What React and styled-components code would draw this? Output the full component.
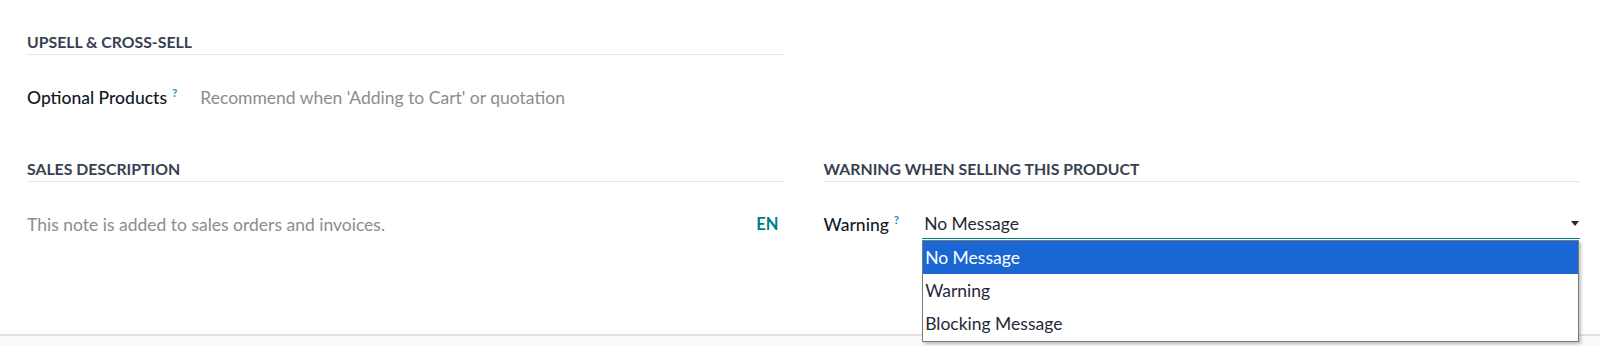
import React from 'react'
import styled, { createGlobalStyle } from 'styled-components'

const GlobalStyle = createGlobalStyle`
  html, body {
    margin: 0;
    padding: 0;
    background: #ffffff;
    font-family: Lato, "Open Sans", sans-serif;
  }
`

const options = ['No Message', 'Warning', 'Blocking Message']

const App = () => {
  return (
    <Page>
      <GlobalStyle />
      <Sheet>
        <Group>
          <Heading>Upsell &amp; Cross-Sell</Heading>
          <FieldRow>
            <Label>Optional Products<Help>?</Help></Label>
            <Placeholder>Recommend when 'Adding to Cart' or quotation</Placeholder>
          </FieldRow>
        </Group>
        <div />

        <Group $lower>
          <Heading>Sales Description</Heading>
          <NoteRow>
            <Placeholder>This note is added to sales orders and invoices.</Placeholder>
            <LangTag>EN</LangTag>
          </NoteRow>
        </Group>

        <Group $lower>
          <Heading>Warning when Selling this Product</Heading>
          <FieldRow>
            <Label>Warning<Help>?</Help></Label>
            <SelectWrap>
              <SelectValue>No Message</SelectValue>
              <Caret />
              <OptionList>
                {options.map((o, i) => (
                  <OptionItem key={o} $active={i === 0}>{o}</OptionItem>
                ))}
              </OptionList>
            </SelectWrap>
          </FieldRow>
        </Group>
      </Sheet>
      <Footer />
    </Page>
  )
}

export default App

const Page = styled.div`
  display: flex;
  flex-direction: column;
  height: 346px;
  overflow: hidden;
`

const Sheet = styled.div`
  display: grid;
  grid-template-columns: 1fr 1fr;
  column-gap: 40px;
  align-content: start;
  height: 334px;
  padding: 0 20px 0 27px;
  box-sizing: border-box;
`

const Group = styled.div`
  display: flex;
  flex-direction: column;
  padding-top: ${p => (p.$lower ? '46px' : '30px')};
`

const Heading = styled.div`
  font-size: 15.8px;
  font-weight: 700;
  line-height: 24px;
  text-transform: uppercase;
  color: #374151;
  border-bottom: 1px solid #e4e4e4;
`

const FieldRow = styled.div`
  display: flex;
  align-items: center;
  gap: 23px;
  margin-top: 28px;
  height: 28px;
`

const NoteRow = styled.div`
  display: flex;
  align-items: center;
  justify-content: space-between;
  margin-top: 28px;
  height: 28px;
  padding-right: 5px;
`

const Label = styled.div`
  font-size: 17.5px;
  font-weight: 500;
  color: #111827;
  white-space: nowrap;
`

const Help = styled.sup`
  font-size: 11.5px;
  font-weight: 700;
  color: #1a92bd;
  margin-left: 5px;
`

const Placeholder = styled.div`
  font-size: 17.5px;
  color: #8c8c8c;
`

const LangTag = styled.div`
  font-size: 16.5px;
  font-weight: 700;
  color: #017e84;
`

const SelectWrap = styled.div`
  position: relative;
  flex: 1;
  display: flex;
  align-items: center;
  height: 28px;
  border-bottom: 1px solid #017e84;
  padding-left: 2px;
`

const SelectValue = styled.div`
  flex: 1;
  font-size: 17.5px;
  color: #1f2937;
`

const Caret = styled.div`
  width: 0;
  height: 0;
  margin-right: 1px;
  border-left: 4px solid transparent;
  border-right: 4px solid transparent;
  border-top: 5px solid #1f2937;
`

const OptionList = styled.div`
  position: absolute;
  top: calc(100% + 2px);
  left: 0;
  right: 1px;
  z-index: 5;
  background: #ffffff;
  border: 1px solid #7a7a7a;
  box-shadow: 2px 2px 3px rgba(0, 0, 0, 0.25);
  padding-bottom: 1px;
`

const OptionItem = styled.div`
  height: 33px;
  line-height: 34px;
  padding-left: 2px;
  font-size: 17.5px;
  color: ${p => (p.$active ? '#ffffff' : '#1f2937')};
  background: ${p => (p.$active ? '#1a67d3' : 'transparent')};
`

const Footer = styled.div`
  flex: 1;
  background: #f8f9fa;
  border-top: 2px solid #e3e3e3;
`
